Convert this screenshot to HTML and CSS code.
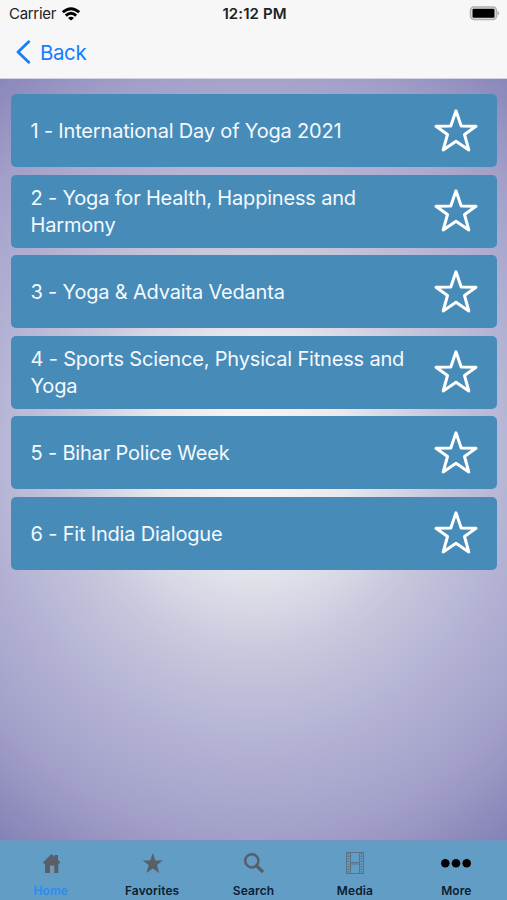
FILE: index.html
```
<!DOCTYPE html>
<html lang="en">
<head>
    <meta charset="UTF-8">
    <title>Yoga</title>
    <link rel="stylesheet" href="styles.css">
</head>
<body>
<svg class="symbols">
    <symbol id="star" viewBox="0 0 46 46">
        <path d="M23 2.8 L28.2 18 L43 18.3 L31.5 26.5 L35.8 42 L23 33.3 L10.2 42 L14.5 26.5 L3 18.3 L17.8 18 Z" fill="none" stroke="#fff" stroke-width="3" stroke-linejoin="round"/>
    </symbol>
</svg>
<div id="app">
    <div class="header">
        <div class="status">
            <div class="carrier">
                <span>Carrier</span>
                <svg width="18" height="14" viewBox="0 0 18 14" fill="none" stroke="#000" stroke-width="2.9">
                    <path d="M0.8 5.2 Q9 -1.8 17.2 5.2"/>
                    <path d="M3.8 8.6 Q9 4 14.2 8.6"/>
                    <path d="M9 13.6 L6 10.9 Q9 8.5 12 10.9 Z" fill="#000" stroke="none"/>
                </svg>
            </div>
            <span class="time">12:12 PM</span>
            <svg class="battery" width="31" height="15" viewBox="0 0 31 15">
                <rect x="1.5" y="1" width="26" height="12.6" rx="3.5" fill="#e2e2e2" stroke="#b0b0b0" stroke-width="1.5"/>
                <rect x="3.5" y="2.8" width="22" height="9" rx="1"/>
                <path d="M28.5 4.8 Q32 7.3 28.5 9.8 Z" fill="#b0b0b0"/>
            </svg>
        </div>
        <div class="nav">
            <svg width="16" height="24" viewBox="0 0 16 24">
                <path d="M13.7 1.8 L3 12 L13.7 22.2" fill="none" stroke="#147efb" stroke-width="2.8" stroke-linecap="round" stroke-linejoin="round"/>
            </svg>
            <span>Back</span>
        </div>
    </div>

    <ul class="list">
        <li><span>1 - International Day of Yoga 2021</span><svg class="star"><use href="#star"/></svg></li>
        <li><span>2 - Yoga for Health, Happiness and<br>Harmony</span><svg class="star"><use href="#star"/></svg></li>
        <li><span>3 - Yoga &amp; Advaita Vedanta</span><svg class="star"><use href="#star"/></svg></li>
        <li><span>4 - Sports Science, Physical Fitness and<br>Yoga</span><svg class="star"><use href="#star"/></svg></li>
        <li><span>5 - Bihar Police Week</span><svg class="star"><use href="#star"/></svg></li>
        <li><span>6 - Fit India Dialogue</span><svg class="star"><use href="#star"/></svg></li>
    </ul>

    <ul class="tabs">
        <li class="active">
            <svg width="32" height="24" viewBox="0 0 32 24" fill="#595f66">
                <path d="M16.5 3 L19.5 5.8 V4 H23 V9 L25.3 11.2 L24.3 12.8 H23.3 V22 H19.3 V14.5 H15 V22 H10 V12.8 H8.9 L8 11.2 Z"/>
                <path d="M15 15 H18.2 V22 H15 Z" fill="#7897ad"/>
            </svg>
            <span>Home</span>
        </li>
        <li>
            <svg width="32" height="24" viewBox="0 0 32 24" fill="#595f66">
                <path d="M16.8 2 L19.4 9.4 H27 L20.9 14.1 L23.2 21.9 L16.8 17.4 L10.4 21.9 L12.7 14.1 L6.6 9.4 H14.2 Z"/>
            </svg>
            <span>Favorites</span>
        </li>
        <li>
            <svg width="32" height="24" viewBox="0 0 32 24" fill="none" stroke="#595f66">
                <circle cx="13.8" cy="9.8" r="6.6" stroke-width="2.5"/>
                <path d="M18.5 14.6 L25 21.1" stroke-width="3.4"/>
            </svg>
            <span>Search</span>
        </li>
        <li>
            <svg width="32" height="24" viewBox="0 0 32 24" fill="none" stroke="#5c7485">
                <rect x="7.5" y="1.5" width="17" height="21"/>
                <path d="M11.5 2 V22 M20.5 2 V22 M11.5 11.5 H20.5 M11.5 13 H20.5"/>
                <path d="M9.5 2 V22 M22.5 2 V22" stroke-width="2" stroke-dasharray="1.3 1.3"/>
            </svg>
            <span>Media</span>
        </li>
        <li>
            <svg width="32" height="24" viewBox="0 0 32 24">
                <circle cx="5.3" cy="12.3" r="4.3"/>
                <circle cx="16" cy="12.3" r="4.3"/>
                <circle cx="26.7" cy="12.3" r="4.3"/>
            </svg>
            <span>More</span>
        </li>
    </ul>
</div>
</body>
</html>
```
FILE: styles.css
```
*{
    margin: 0;
    padding: 0;
    list-style: none;
    box-sizing: border-box;
}
body{
    font-family: Inter, "Liberation Sans", sans-serif;
}
.symbols{
    display: none;
}
#app{
    width: 507px;
    height: 900px;
    display: flex;
    flex-direction: column;
    overflow: hidden;
    background: radial-gradient(ellipse 445px 495px at 253px 450px, #fafafa 0%, #e8e8ee 22%, #c5c5dc 43%, #b3b2d4 60%, #a19fc8 79%, #807db4 100%);
}

/* 顶部 */
.header{
    height: 79px;
    flex: none;
    background-color: #f7f7f7;
    border-bottom: 1px solid #d5d3df;
}
.status{
    height: 27px;
    padding: 0 7px 0 9px;
    display: grid;
    grid-template-columns: 1fr auto 1fr;
    align-items: center;
    font-size: 15px;
    color: #222;
}
.carrier{
    display: flex;
    align-items: center;
    gap: 6px;
    letter-spacing: -0.3px;
}
.time{
    font-weight: 600;
    letter-spacing: 0.1px;
}
.battery{
    justify-self: end;
}
.nav{
    height: 50px;
    padding-left: 15px;
    display: flex;
    align-items: center;
    gap: 9px;
    font-size: 20.5px;
    color: #147efb;
    letter-spacing: -0.4px;
}

/* 列表 */
.list{
    flex: 1;
    padding: 15px 10px 0 11px;
    display: flex;
    flex-direction: column;
    gap: 7.6px;
}
.list li{
    height: 73px;
    padding: 0 18.5px 0 19.5px;
    display: flex;
    align-items: center;
    justify-content: space-between;
    border-radius: 5px;
    background-color: #478cb9;
    color: #f4f9fd;
    font-size: 20px;
    line-height: 27px;
    letter-spacing: -0.18px;
    white-space: nowrap;
}
.list span{
    padding-top: 2px;
}
.star{
    width: 46px;
    height: 46px;
    flex: none;
}

/* 底部 */
.tabs{
    height: 60px;
    flex: none;
    display: flex;
    background-color: #629dc6;
    border-top: 1px solid #7a93bd;
}
.tabs li{
    flex: 1;
    padding-top: 10px;
    display: flex;
    flex-direction: column;
    align-items: center;
    gap: 8px;
    font-size: 12px;
    line-height: 15px;
    font-weight: 600;
    letter-spacing: 0.1px;
    color: #0b2030;
}
.tabs .active{
    color: #2b8cf0;
}
```
